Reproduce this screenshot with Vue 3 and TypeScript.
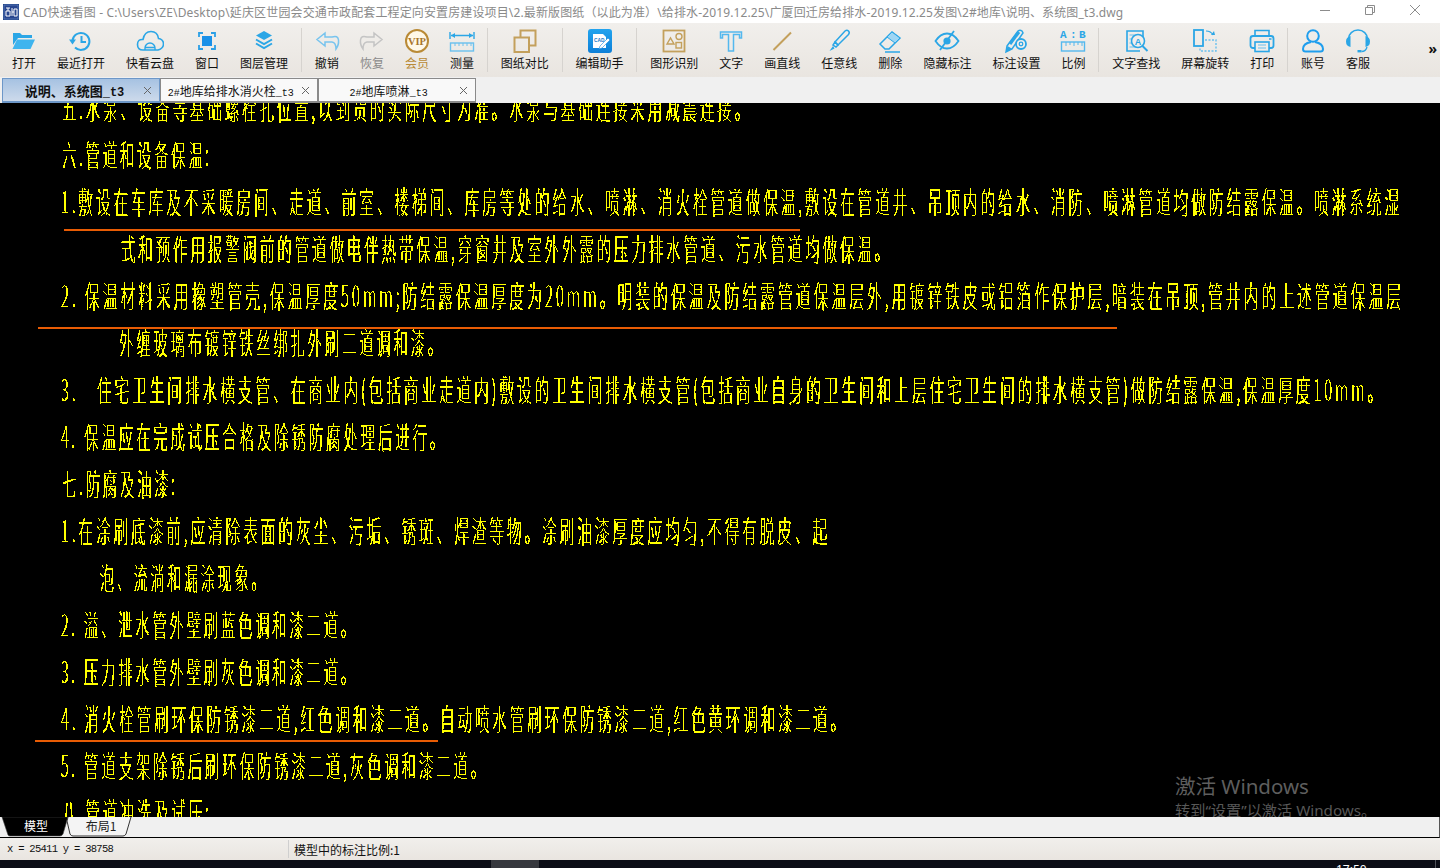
<template>
  <div class="app">
    <header class="titlebar">
      <svg class="app-logo" viewBox="0 0 16 16" width="16" height="16">
        <rect width="16" height="16" fill="#1d3f86" />
        <rect x="1" y="1" width="14" height="14" fill="#27458f" stroke="#6f8fc8" stroke-width=".6" />
        <path d="M3 4h4M3 7h4v5H3zM5 4v3M9 4v8M11 5h3v7h-3zM9 8h2" fill="none" stroke="#fff" stroke-width="1" />
      </svg>
      <span class="title-text">CAD快速看图 - C:\Users\ZE\Desktop\延庆区世园会交通市政配套工程定向安置房建设项目\2.最新版图纸（以此为准）\给排水-2019.12.25\广厦回迁房给排水-2019.12.25发图\2#地库\说明、系统图_t3.dwg</span>
      <div class="win-controls">
        <svg viewBox="0 0 12 12" width="12" height="12"><path d="M1 6.500h10" stroke="#8c8c8c" fill="none" /></svg>
        <svg viewBox="0 0 12 12" width="12" height="12"><path d="M1.500 3.500h7v7h-7zM3.500 3.500v-2h7v7h-2" stroke="#8c8c8c" fill="none" /></svg>
        <svg viewBox="0 0 12 12" width="12" height="12"><path d="M1 1l10 10M11 1L1 11" stroke="#8c8c8c" fill="none" /></svg>
      </div>
    </header>

    <nav class="toolbar">
      <template v-for="tool in tools" :key="tool.label">
        <span v-if="tool.sep" class="sep"></span>
        <div v-else class="tool" :class="tool.tone">
          <svg class="tool-icon" viewBox="0 0 28 28" width="28" height="28" v-html="tool.svg"></svg>
          <span class="tool-label">{{ tool.label }}</span>
        </div>
      </template>
      <span class="more">»</span>
    </nav>

    <div class="tabs">
      <div v-for="tab in tabs" :key="tab.name" class="tab" :class="{ 'tab--active': tab.active }">
        <span class="tab-name"><span class="mono">{{ tab.pre }}</span>{{ tab.name }}<span class="mono">_t3</span></span>
        <svg class="tab-close" viewBox="0 0 9 9" width="9" height="9"><path d="M1 1l7 7M8 1L1 8" stroke="#666" fill="none" /></svg>
      </div>
    </div>

    <main class="canvas">
      <svg class="drawing" viewBox="0 103 1440 714" width="1440" height="714">
        <defs>
          <!-- hard threshold so the text reads like aliased CAD vectors -->
          <filter id="crisp" x="0" y="103" width="1440" height="714" filterUnits="userSpaceOnUse" color-interpolation-filters="sRGB">
            <feColorMatrix type="matrix" values="0 0 0 0 1  0 0 0 0 1  0 0 0 0 0  1 0 0 0 0" />
            <feComponentTransfer>
              <feFuncA type="discrete" tableValues="0 1" />
            </feComponentTransfer>
          </filter>
        </defs>
        <g filter="url(#crisp)">
          <text
            v-for="line in lines"
            :key="line.y"
            class="note"
            :x="line.x"
            :y="line.y + 11"
            :textLength="line.w"
            lengthAdjust="spacingAndGlyphs"
          >{{ line.text }}</text>
        </g>
        <line v-for="mark in marks" :key="mark.y" class="mark" :x1="mark.x1" :x2="mark.x2" :y1="mark.y" :y2="mark.y" />
      </svg>
      <div class="watermark">
        <div class="wm-big">激活 Windows</div>
        <div class="wm-small">转到“设置”以激活 Windows。</div>
      </div>
    </main>

    <div class="sheets">
      <svg viewBox="0 0 140 20" width="140" height="20">
        <path d="M1 0l6 18q.5 1 2 1h50q2 0 3-2l5-17z" fill="#000" stroke="#444" stroke-width=".6" />
        <path d="M67 0l-1 4 3 13q1 2 3 2h50q2 0 3-2l5-17" fill="#f4f4f4" stroke="#333" />
        <text x="35" y="14" class="sheet-text sheet-text--on" text-anchor="middle">模型</text>
        <text x="100" y="14" class="sheet-text" text-anchor="middle">布局1</text>
      </svg>
    </div>

    <footer class="status">
      <span class="coords">x = 25411 y = 38758</span>
      <span class="scale">模型中的标注比例:1</span>
    </footer>

    <div class="taskbar">
      <span class="task-slot"></span>
      <span class="clock">17:50</span>
      <span class="task-edge"></span>
    </div>
  </div>
</template>

<script setup lang="ts">
interface Tool {
  label: string
  svg?: string
  sep?: boolean
  tone?: string
}

const b = '#2ba6e6'
const g = '#c3a05c'
const outline = (c: string, w = 1.6) => `fill="none" stroke="${c}" stroke-width="${w}"`

const tools: Tool[] = [
  { label: '打开', svg: `<path d="M3 6h7l2 2h10v3H8l-5 7z" fill="${b}"/><path d="M7 12.500h18l-4.500 9.500H2.500z" fill="#3fb4ee"/>` },
  { label: '最近打开', svg: `<path d="M8 20.500a8.500 8.500 0 1 0-2.500-7" ${outline(b, 2)}/><path d="M2 12.500h7l-3.500 5z" fill="${b}"/><path d="M14.500 9v6h4.500" ${outline(b, 2)}/>` },
  { label: '快看云盘', svg: `<path d="M7 23q-5.500 0-5.500-5.500T7 12.500q1.500-8 8-8t7.500 7q5 1 5 5.500T22 23z" ${outline(b, 1.6)}/><path d="M9 23v-2a5 5 0 0 1 10 0v2M9 20.500h10" ${outline(b, 1.4)}/>` },
  { label: '窗口', svg: `<path d="M6 10V6h4M18 6h4v4M22 18v4h-4M10 22H6v-4" ${outline('#2b9fe6', 1.8)}/><rect x="9" y="9" width="10" height="10" fill="#1990e8"/>` },
  { label: '图层管理', svg: `<path d="M14 4l8 4.500-8 4.500-8-4.500z" fill="${b}"/><path d="M6 12.500l8 4.500 8-4.500M6 16.500l8 4.500 8-4.500" ${outline(b, 2)}/>` },
  { label: 's1', sep: true },
  { label: '撤销', svg: `<path d="M12 6l-8 6.500 8 6.500v-4h7q4 .5 4 7 3-4 2.500-9T19 10h-7z" ${outline('#78c4ee', 1.5)}/>` },
  { label: '恢复', tone: 'tool--off', svg: `<path d="M16 6l8 6.500-8 6.500v-4H9q-4 .5-4 7-3-4-2.500-9T9 10h7z" ${outline('#c4c4c4', 1.5)}/>` },
  { label: '会员', tone: 'tool--vip', svg: `<circle cx="14" cy="14" r="11" fill="#fff8e8" stroke="#b98a36" stroke-width="2"/><text x="14" y="18" text-anchor="middle" font-family="Liberation Serif" font-weight="700" font-size="10.500" fill="#a8742a">VIP</text>` },
  { label: '测量', svg: `<path d="M2 5v7M26 5v7M3 8.500h22" ${outline(b, 1.4)}/><path d="M3 8.500l4-2.500v5zM25 8.500l-4-2.500v5z" fill="${b}"/><rect x="2.500" y="16" width="23" height="8" ${outline('#6ac0ee', 1.4)}/><path d="M7 16v3M11 16v3M15 16v3M19 16v3M23 16v3" ${outline('#6ac0ee', 1)}/>` },
  { label: 's2', sep: true },
  { label: '图纸对比', svg: `<path d="M9.500 11V3.500h15v15H18" ${outline(g, 2)}/><rect x="3.500" y="10.500" width="14.500" height="14.500" ${outline(g, 2)}/>` },
  { label: 's3', sep: true },
  { label: '编辑助手', svg: `<defs><linearGradient id="edit-bg" x1="0" y1="0" x2="0" y2="1"><stop offset="0" stop-color="#23a4ee"/><stop offset="1" stop-color="#0c7fd8"/></linearGradient></defs><rect x="2" y="2" width="24" height="24" rx="3" fill="url(#edit-bg)"/><path d="M7 7h10l3 3v11H7z" fill="#fff"/><text x="8" y="15" font-family="Liberation Sans" font-weight="700" font-size="4.800" fill="#1778c8">CAD</text><path d="M14 19l8-8 2 2-8 8-3 1z" fill="#fff" stroke="#1888dc" stroke-width=".6"/>` },
  { label: 's4', sep: true },
  { label: '图形识别', svg: `<rect x="3.500" y="3.500" width="21" height="21" ${outline(g, 1.8)}/><path d="M7 17l3.500-6 3.500 6z" ${outline(g, 1.4)}/><circle cx="19" cy="9.500" r="3" ${outline(g, 1.4)}/><rect x="16" y="15.500" width="5.500" height="5.500" ${outline(g, 1.4)}/>` },
  { label: '文字', svg: `<path d="M3.500 5h21v6h-2v-3.500h-6V24h-5V7.500h-6V11h-2z" ${outline('#54b8ee', 1.5)}/>` },
  { label: '画直线', svg: `<path d="M5.500 23L23 5.500" ${outline(g, 2)}/>` },
  { label: '任意线', svg: `<path d="M10 15L20 4q2-1.500 3.500 0t0 3.500L13 18z" ${outline(b, 1.5)}/><path d="M10 15l3 3-2 2-3-2z" ${outline(b, 1.5)}/><path d="M8 19l-3.500 5 5-2.500z" fill="${b}"/>` },
  { label: '删除', svg: `<path d="M4 17L16 5l8 6-11 11H9z" ${outline(b, 1.5)}/><path d="M11 10l8 6 5-5-8-6z" fill="#9ed6f4" stroke="${b}" stroke-width="1"/><path d="M9 25h15" ${outline(b, 1.5)}/>` },
  { label: '隐藏标注', svg: `<path d="M2.500 14q5-7.500 11.500-7.500T25.500 14q-5 7.500-11.500 7.500T2.500 14z" ${outline(b, 1.8)}/><circle cx="14" cy="14" r="3.600" fill="${b}"/><path d="M7 23L21 4" ${outline(b, 1.8)}/>` },
  { label: '标注设置', svg: `<path d="M5 19L16 4q2-1.500 4 0l1 2-11 16-6 3z" fill="none" stroke="${b}" stroke-width="1.500"/><path d="M4 25l1.500-6 5 3z" fill="${b}"/><path d="M8 17l9-12" stroke="${b}" stroke-width="3"/><circle cx="19" cy="17" r="5" fill="#f0eeeb" stroke="${b}" stroke-width="1.800"/><circle cx="19" cy="17" r="1.800" ${outline(b, 1.3)}/>` },
  { label: '比例', svg: `<text x="1" y="11" font-family="Liberation Mono" font-weight="700" font-size="11" fill="${b}">A</text><text x="11" y="11" font-family="Liberation Mono" font-weight="700" font-size="11" fill="${b}">:</text><text x="20" y="11" font-family="Liberation Mono" font-weight="700" font-size="11" fill="${b}">B</text><rect x="2.500" y="15" width="23" height="9" ${outline('#54b8ee', 1.4)}/><path d="M7 15v4M11 15v3M15 15v4M19 15v3M23 15v4" ${outline('#54b8ee', 1)}/>` },
  { label: 's5', sep: true },
  { label: '文字查找', svg: `<path d="M21 10V4H5v20h13" ${outline(b, 1.6)}/><path d="M7.500 8h5M7.500 12h2M7.500 16h2M7.500 20h6" ${outline('#6ac0ee', 1.2)}/><circle cx="16" cy="14" r="6.500" fill="#f0eeeb" stroke="${b}" stroke-width="1.600"/><text x="16" y="17.500" text-anchor="middle" font-family="Liberation Sans" font-weight="700" font-size="9" fill="${b}">A</text><path d="M20.500 19l5 5" ${outline(b, 2)}/>` },
  { label: '屏幕旋转', svg: `<rect x="3" y="3" width="9" height="16" ${outline(b, 1.8)}/><path d="M14 13h11v11H9v-3" fill="none" stroke="#6ac0ee" stroke-width="1.400" stroke-dasharray="2 1.500"/><path d="M15 4q5 0 7 4" ${outline(b, 1.2)}/><path d="M20 8l4 0-1-4z" fill="${b}"/>` },
  { label: '打印', svg: `<path d="M7 9V3.500h14V9" ${outline(b, 1.6)}/><rect x="2.500" y="9" width="23" height="12" rx="2.500" ${outline(b, 1.8)}/><rect x="7" y="15" width="14" height="9.500" fill="#f0eeeb" stroke="${b}" stroke-width="1.600"/><path d="M10 18h8M10 21h8" ${outline('#6ac0ee', 1.2)}/><path d="M21 12h2.500" ${outline(b, 1.5)}/>` },
  { label: 's6', sep: true },
  { label: '账号', svg: `<circle cx="14" cy="9" r="5.800" ${outline('#1f9eee', 2)}/><path d="M12 15q-8 1.500-8 7 0 2.500 2.500 2.500h15q2.500 0 2.500-2.500 0-5.500-8-7" ${outline('#1f9eee', 2)}/>` },
  { label: '客服', svg: `<path d="M4.500 12a9.500 9 0 0 1 19 0" ${outline(b, 1.5)}/><path d="M6.500 9v11Q2 19 2 14.500T6.500 9zM21.500 9v11q4.500-1 4.500-5.500T21.500 9z" fill="${b}"/><path d="M23 20q-1 4.500-5.500 4.500" ${outline(b, 1.3)}/><rect x="13.500" y="23" width="4" height="2.400" fill="${b}"/>` },
]

const tabs = [
  { pre: '', name: '说明、系统图', active: true },
  { pre: '2#', name: '地库给排水消火栓', active: false },
  { pre: '2#', name: '地库喷淋', active: false },
]

const lines = [
  { y: 108, x: 62, w: 690, text: '五.水泵、设备等基础螺栓孔位置,以到货的实际尺寸为准。水泵与基础连接采用减震连接。' },
  { y: 155, x: 62, w: 150, text: '六.管道和设备保温:' },
  { y: 202, x: 61, w: 1341, text: '1.敷设在车库及不采暖房间、走道、前室、楼梯间、库房等处的给水、喷淋、消火栓管道做保温,敷设在管道井、吊顶内的给水、消防、喷淋管道均做防结露保温。喷淋系统湿' },
  { y: 249, x: 121, w: 771, text: '式和预作用报警阀前的管道做电伴热带保温,穿窗井及室外外露的压力排水管道、污水管道均做保温。' },
  { y: 296, x: 61, w: 1343, text: '2. 保温材料采用橡塑管壳,保温厚度50mm;防结露保温厚度为20mm。明装的保温及防结露管道保温层外,用镀锌铁皮或铝箔作保护层,暗装在吊顶,管井内的上述管道保温层' },
  { y: 343, x: 119, w: 326, text: '外缠玻璃布镀锌铁丝绑扎外刷二道调和漆。' },
  { y: 390, x: 61, w: 1324, text: '3.   住宅卫生间排水横支管、在商业内(包括商业走道内)敷设的卫生间排水横支管(包括商业自身的卫生间和上层住宅卫生间的排水横支管)做防结露保温,保温厚度10mm。' },
  { y: 437, x: 61, w: 386, text: '4. 保温应在完成试压合格及除锈防腐处理后进行。' },
  { y: 484, x: 62, w: 116, text: '七.防腐及油漆:' },
  { y: 531, x: 61, w: 769, text: '1.在涂刷底漆前,应清除表面的灰尘、污垢、锈斑、焊渣等物。涂刷油漆厚度应均匀,不得有脱皮、起' },
  { y: 578, x: 100, w: 168, text: '泡、流淌和漏涂现象。' },
  { y: 625, x: 61, w: 297, text: '2. 溢、泄水管外壁刷蓝色调和漆二道。' },
  { y: 672, x: 61, w: 297, text: '3. 压力排水管外壁刷灰色调和漆二道。' },
  { y: 719, x: 61, w: 787, text: '4. 消火栓管刷环保防锈漆二道,红色调和漆二道。自动喷水管刷环保防锈漆二道,红色黄环调和漆二道。' },
  { y: 766, x: 61, w: 427, text: '5. 管道支架除锈后刷环保防锈漆二道,灰色调和漆二道。' },
  { y: 813, x: 62, w: 150, text: '八.管道冲洗及试压:' },
]

const marks = [
  { y: 230, x1: 64, x2: 800 },
  { y: 328, x1: 38, x2: 1117 },
  { y: 741, x1: 35, x2: 438 },
]
</script>

<style scoped>
.app {
  width: 1440px;
  height: 868px;
  display: flex;
  flex-direction: column;
  overflow: hidden;
  background: #f0f0f0;
  font-family: "Noto Sans", "Noto Sans CJK SC", sans-serif;
  color: #111;
}

.titlebar {
  height: 23px;
  flex: none;
  display: flex;
  align-items: center;
  padding-left: 3px;
  background: #fff;
}

.app-logo {
  flex: none;
  margin-right: 4px;
}

.title-text {
  font-size: 12px;
  letter-spacing: 0.13px;
  color: #8a8a8a;
  white-space: nowrap;
}

.win-controls {
  margin-left: auto;
  display: flex;
  gap: 33px;
  padding-right: 19px;
  margin-top: -4px;
}

.toolbar {
  height: 54px;
  flex: none;
  display: flex;
  align-items: flex-start;
  padding-left: 1.5px;
  background: linear-gradient(#f1efec, #e9e5e0);
  position: relative;
}

.sep {
  width: 1px;
  height: 44px;
  margin: 5px 2.4px 0;
  background: #d6d3cf;
  flex: none;
}

.tool {
  flex: none;
  display: flex;
  flex-direction: column;
  align-items: center;
  padding: 4px 10.5px 0;
}

.tool-icon {
  margin: 0 -6px;
  flex: none;
}

.tool-label {
  font-size: 12px;
  line-height: 16px;
  white-space: nowrap;
  font-family: "Noto Sans CJK SC", sans-serif;
}

.tool--off .tool-label {
  color: #8a8a8a;
}

.tool--vip .tool-label {
  color: #b98a36;
}

.more {
  position: absolute;
  right: 3px;
  top: 16px;
  font-size: 14px;
  font-weight: 700;
  line-height: 20px;
}

.tabs {
  height: 26px;
  flex: none;
  display: flex;
  padding: 1px 0 0 2px;
  box-sizing: border-box;
  background: #f0f0f0;
}

.tab {
  width: 158px;
  height: 25px;
  box-sizing: border-box;
  display: flex;
  align-items: center;
  justify-content: center;
  position: relative;
  background: #f9f9f9;
  border: 1px solid #8a8a8a;
  border-bottom-width: 2px;
  margin-right: -0.2px;
  font-size: 12px;
  font-family: "Noto Sans CJK SC", sans-serif;
  padding-right: 16px;
}

.tab--active {
  background: linear-gradient(#a6c2e2, #cddaeb);
  border-color: #6d97c8;
  font-weight: 700;
  font-size: 13px;
  padding-right: 13px;
}

.mono {
  font-family: "Liberation Mono", monospace;
  font-size: 10px;
}

.tab--active .mono {
  font-size: 12px;
}

.tab-close {
  position: absolute;
  right: 7px;
  top: 7px;
}

.canvas {
  flex: 1;
  position: relative;
  background: #000;
  overflow: hidden;
  min-height: 0;
}

.drawing {
  display: block;
}

.note {
  fill: #fff;
  stroke: #000;
  stroke-width: 0.38px;
  font-family: "Noto Sans CJK SC", sans-serif;
  font-size: 30px;
  font-weight: 300;
  letter-spacing: 6px;
  white-space: pre;
}

.mark {
  stroke: #e85c04;
  stroke-width: 2px;
}

.watermark {
  position: absolute;
  left: 1175px;
  top: 671px;
  color: #5e5e5e;
  font-family: "Noto Sans", "Noto Sans CJK SC", sans-serif;
  white-space: nowrap;
}

.wm-big {
  font-size: 20.5px;
  line-height: 24px;
}

.wm-small {
  font-size: 15.2px;
  line-height: 20px;
  color: #585858;
  margin-top: 2px;
}

.sheets {
  height: 20px;
  flex: none;
  display: flex;
  background: #f0f0f0;
  border-bottom: 1px solid #000;
  padding-left: 1px;
  border-right: 1px solid #555;
}

.sheet-text {
  font-size: 12px;
  font-family: "Noto Sans CJK SC", sans-serif;
  fill: #222;
}

.sheet-text--on {
  fill: #fff;
}

.status {
  height: 22px;
  flex: none;
  display: flex;
  align-items: center;
  background: linear-gradient(#f1efec, #e9e5e0);
}

.coords {
  width: 281px;
  padding-left: 7px;
  font-family: "Liberation Mono", monospace;
  font-size: 10.5px;
  letter-spacing: -0.72px;
  height: 18px;
  line-height: 18px;
  border-right: 1px solid #cfcfcf;
}

.scale {
  margin-left: 5px;
  font-size: 12px;
  font-family: "Noto Sans CJK SC", sans-serif;
}

.taskbar {
  height: 8px;
  flex: none;
  position: relative;
  background: #0b0d16;
  overflow: hidden;
}

.task-slot {
  position: absolute;
  left: 491px;
  top: 0;
  width: 48px;
  height: 8px;
  background: #36383e;
}

.task-edge {
  position: absolute;
  left: 1435px;
  top: 0;
  width: 1px;
  height: 8px;
  background: #50525a;
}

.clock {
  position: absolute;
  left: 1336px;
  top: 3px;
  font-size: 12px;
  color: #fff;
  line-height: 14px;
}
</style>
